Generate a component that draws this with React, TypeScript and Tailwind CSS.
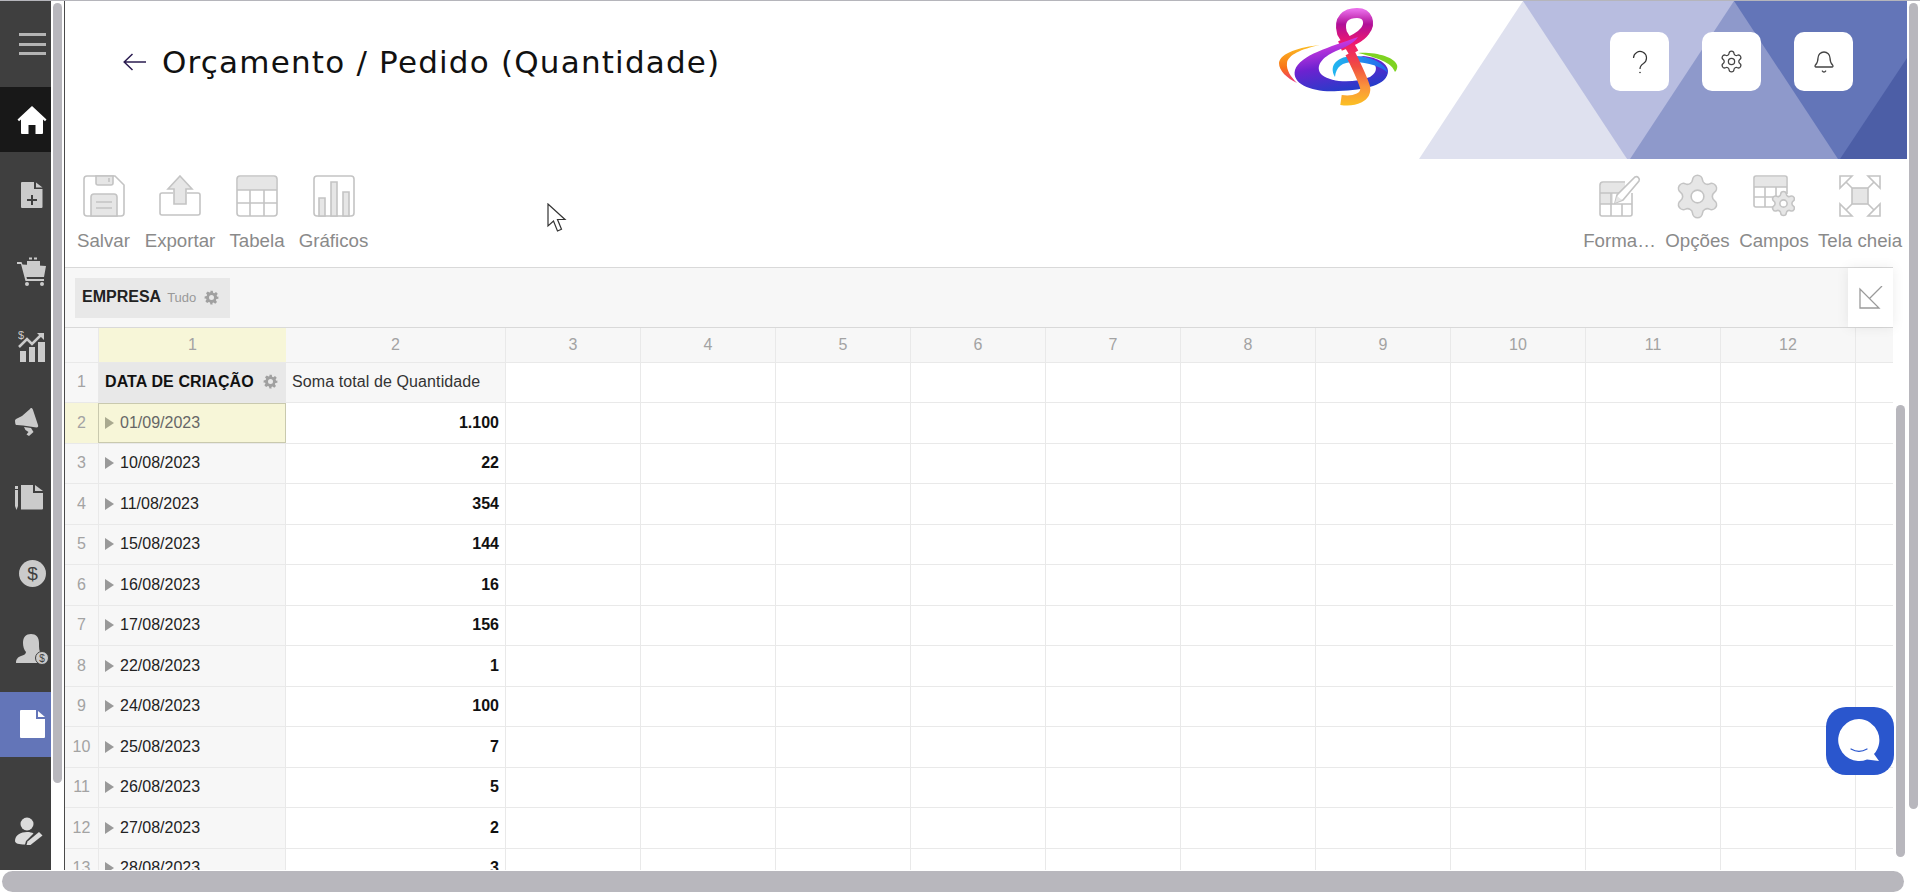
import type { FC, ReactNode } from "react";
import { Settings, Bell } from "lucide-react";

const FONT = "font-['Liberation_Sans',Arial,sans-serif]";

const GearSolid: FC<{ className?: string }> = ({ className }) => (
  <svg viewBox="0 0 24 24" className={className} fill="currentColor">
    <path
      fillRule="evenodd"
      d="M10 1h4l.6 3.2 1.900.8 2.700-1.800 2.800 2.800-1.800 2.700.8 1.900L23 10.200v3.600l-3.200.6-.8 1.900 1.800 2.700-2.800 2.800-2.700-1.800-1.900.8L13.800 23h-3.600l-.6-3.200-1.900-.8-2.700 1.800-2.800-2.800 1.800-2.700-.8-1.900L1 13.800v-3.600l3.200-.6.8-1.900L3.200 5 6 2.200l2.700 1.800 1.900-.8L10 1Zm2 7a4 4 0 1 0 0 8 4 4 0 0 0 0-8Z"
    />
  </svg>
);

const sideIcons: { key: string; active?: "dark" | "blue"; icon: ReactNode }[] = [
  {
    key: "home",
    active: "dark",
    icon: (
      <svg viewBox="0 0 30 30" className="h-[30px] w-[30px] text-white" fill="currentColor">
        <path d="M15 1 0.500 14.500l1.500 1.700L4 14.500V28a1 1 0 0 0 1 1h6.500v-9h7v9H25a1 1 0 0 0 1-1V14.500l2 1.700 1.500-1.700L15 1Z" />
      </svg>
    ),
  },
  {
    key: "new",
    icon: (
      <svg viewBox="0 0 22 26" className="h-[26px] w-[22px]" fill="currentColor">
        <path fillRule="evenodd" d="M1 0h12v7h8.500v18a1 1 0 0 1-1 1H1a1 1 0 0 1-1-1V1a1 1 0 0 1 1-1Zm9 13v4H6v2h4v4h2v-4h4v-2h-4v-4h-2Z" />
        <path d="M15 0.500 21.500 5.500H15Z" />
      </svg>
    ),
  },
  {
    key: "cart",
    icon: (
      <svg viewBox="0 0 30 30" className="h-[30px] w-[30px]" fill="currentColor">
        <path d="M10 5h13v8H10Z" />
        <path d="M12 1.500h3v2h-3ZM17 1.500h3v2h-3Z" />
        <path d="M0 6h4.500l1 2.500 23.500 1.500-2 11H9.500l.5 2h17v2H8.500L4 8H0Z" />
        <circle cx="10" cy="28" r="2" />
        <circle cx="25" cy="28" r="2" />
      </svg>
    ),
  },
  {
    key: "chart",
    icon: (
      <svg viewBox="0 0 28 32" className="h-[32px] w-[28px]" fill="currentColor">
        <path d="M2 21h6v11H2ZM11 17h6v15h-6ZM20 12h7v20h-7Z" />
        <path d="M1 17 9 9l5 5 9-9" fill="none" stroke="currentColor" strokeWidth="2.500" />
        <path d="M19 3h7v7Z" />
        <text x="0" y="9" fontSize="11" fontFamily="Liberation Sans">$</text>
      </svg>
    ),
  },
  {
    key: "megaphone",
    icon: (
      <svg viewBox="0 0 24 28" className="mr-[10px] h-[28px] w-[24px]" fill="currentColor">
        <path d="M16 0c1 0 1.500.5 2 2l5 15c.5 1.500 0 2.500-1.500 2.500L8 17.500l-6-.5c-1 0-1.500-.5-1.700-1.500L0 13c0-1 .5-1.500 1-2l6-3 8-7c.4-.6.600-1 1-1Z" />
        <path d="M9 19l7 1 2.500 4-4.500 4-2.500-1.500 2-2.500-3-2Z" />
      </svg>
    ),
  },
  {
    key: "docs",
    icon: (
      <svg viewBox="0 0 28 26" className="mr-[6px] h-[26px] w-[28px]" fill="currentColor">
        <path d="M0 2h3v3H0ZM0 6h3v16l-1.500 4L0 22Z" />
        <path d="M6 1h12v8h10v15.500a1 1 0 0 1-1 1H6Z" />
        <path d="M20 1l8 6h-8Z" />
      </svg>
    ),
  },
  {
    key: "dollar",
    icon: (
      <svg viewBox="0 0 27 27" className="h-[27px] w-[27px]">
        <circle cx="13.500" cy="13.500" r="13.500" fill="currentColor" />
        <text x="13.500" y="20" fontSize="19" textAnchor="middle" fill="#3f3f3f" fontFamily="Liberation Sans">$</text>
      </svg>
    ),
  },
  {
    key: "seller",
    icon: (
      <svg viewBox="0 0 34 32" className="h-[32px] w-[34px]">
        <path fill="currentColor" d="M16 1c5 0 8 3 8 9 0 5 0 8 2 10l1 4-5 4 0 2H1c0-4 2-6 5-7 3-1 5-2 5-4-2-2-3-6-3-9 0-6 3-9 8-9Z" />
        <circle cx="27" cy="25" r="6.500" fill="currentColor" stroke="#3f3f3f" strokeWidth="1" />
        <text x="27" y="29" fontSize="10" textAnchor="middle" fill="#3f3f3f" fontFamily="Liberation Sans">$</text>
      </svg>
    ),
  },
  {
    key: "report",
    active: "blue",
    icon: (
      <svg viewBox="0 0 25 28" className="h-[28px] w-[25px] text-white" fill="currentColor">
        <path d="M1 0h15v9h9v18a1 1 0 0 1-1 1H1a1 1 0 0 1-1-1V1a1 1 0 0 1 1-1Z" />
        <path d="M18 1l7 6h-7Z" />
      </svg>
    ),
  },
];

const Sidebar: FC = () => (
  <aside className="flex h-full w-[51px] shrink-0 flex-col bg-[#3f3f3f] text-[#cbcbcb]">
    <div className="flex h-[86px] shrink-0 items-center justify-center pl-[14px]">
      <div className="flex w-[27px] flex-col gap-[6.500px]">
        <span className="h-[3px] bg-[#b4b4b4]" />
        <span className="h-[3px] bg-[#b4b4b4]" />
        <span className="h-[3px] bg-[#b4b4b4]" />
      </div>
    </div>
    <div className="flex flex-col gap-[10.600px]">
      {sideIcons.map((item) => (
        <div
          key={item.key}
          className={
            item.active === "dark"
              ? "flex h-[65px] items-center justify-center bg-[#181818] pl-[13px]"
              : item.active === "blue"
                ? "flex h-[65px] items-center justify-center bg-[#6375b8] pl-[13px]"
                : "flex h-[65px] items-center justify-center pl-[13px]"
          }
        >
          {item.icon}
        </div>
      ))}
    </div>
    <div className="mt-[60px] flex justify-center pl-[6px] text-[#dcdcdc]">
      <svg viewBox="0 0 28 28" className="h-[28px] w-[28px]" fill="currentColor">
        <circle cx="12" cy="7" r="6.500" />
        <path d="M0 24c0-6 6-9 12-9 3 0 5 .5 6.500 1.500L11 24l-1 3.500C4 27.500 0 26.500 0 24Z" />
        <path d="M24 15l3.500 3.500-12 9.500-4 0 1-3.500Z" />
      </svg>
    </div>
  </aside>
);

const stroke = "#c4c4c4";
const fillLight = "#e6e6e6";

const ToolIcon: FC<{ name: string }> = ({ name }) => {
  const common = { fill: "none", stroke, strokeWidth: 1.600 };
  switch (name) {
    case "save":
      return (
        <svg viewBox="0 0 42 42" className="h-[42px] w-[42px]">
          <path {...common} d="M4 1h28l9 9v28a3 3 0 0 1-3 3H4a3 3 0 0 1-3-3V4a3 3 0 0 1 3-3Z" />
          <path {...common} fill={fillLight} d="M13 1h17v7a2 2 0 0 1-2 2H15a2 2 0 0 1-2-2Z" />
          <path {...common} d="M26 3v4" />
          <path {...common} fill={fillLight} d="M8 41V22a3 3 0 0 1 3-3h20a3 3 0 0 1 3 3v19Z" />
          <path {...common} d="M13 27h16M13 33h16" />
        </svg>
      );
    case "export":
      return (
        <svg viewBox="0 0 42 42" className="h-[42px] w-[42px]">
          <path {...common} d="M14 18H3a2 2 0 0 0-2 2v18a2 2 0 0 0 2 2h36a2 2 0 0 0 2-2V20a2 2 0 0 0-2-2H28" />
          <path {...common} fill={fillLight} d="M21 1 33 14h-6v15H15V14H9Z" />
        </svg>
      );
    case "table":
      return (
        <svg viewBox="0 0 42 42" className="h-[42px] w-[42px]">
          <path fill={fillLight} d="M2 2h38v13H2Z" />
          <rect {...common} x="1" y="1" width="40" height="40" rx="3" />
          <path {...common} d="M1 15h40M1 28h40M14 15v26M28 15v26" />
        </svg>
      );
    case "chart":
      return (
        <svg viewBox="0 0 42 42" className="h-[42px] w-[42px]">
          <rect {...common} x="1" y="1" width="40" height="40" rx="3" />
          <path {...common} fill={fillLight} d="M6 41V23h6v18ZM18 41V7h6v34ZM30 41V17h6v24Z" />
        </svg>
      );
    case "format":
      return (
        <svg viewBox="0 0 42 42" className="h-[42px] w-[42px]">
          <path fill={fillLight} d="M2 8h24v10H2ZM2 18h12v11H2Z" />
          <path {...common} d="M33 18v21a2 2 0 0 1-2 2H3a2 2 0 0 1-2-2V10a3 3 0 0 1 3-3h22" />
          <path {...common} d="M1 18h24M1 29h32M12 18v23M23 29v12" />
          <path fill="#fff" stroke={stroke} strokeWidth="1.600" d="M36 2a3 3 0 0 1 4 4L24 25l-8 3 2-8Z" />
          <path fill={fillLight} d="M18 21l5 4-7 3Z" />
        </svg>
      );
    case "options":
      return (
        <div className="flex h-[42px] w-[42px] items-center justify-center">
          <Settings
            className="h-[51px] w-[51px] shrink-0 [&>circle]:fill-white"
            fill={fillLight}
            stroke={stroke}
            strokeWidth={0.750}
          />
        </div>
      );
    case "fields":
      return (
        <svg viewBox="0 0 42 42" className="h-[42px] w-[42px]">
          <path fill={fillLight} d="M2 2h31v10H2Z" />
          <path {...common} d="M20 32H3a2 2 0 0 1-2-2V3a2 2 0 0 1 2-2h29a2 2 0 0 1 2 2v16" />
          <path {...common} d="M1 12h33M1 22h22M12 12v20M23 12v12" />
          <Settings x={16} y={14} width={29} height={29} fill={fillLight} stroke={stroke} strokeWidth={1.300} className="[&>circle]:fill-white" />
        </svg>
      );
    default:
      return (
        <svg viewBox="0 0 42 42" className="h-[42px] w-[42px]">
          <rect fill={fillLight} stroke={stroke} strokeWidth="1.600" x="13" y="13" width="16" height="16" />
          <path {...common} d="M1 1h12L1 13ZM41 1H29l12 12ZM1 41h12L1 29ZM41 41H29l12-12Z" />
          <path {...common} d="M7 7l6 6M35 7l-6 6M7 35l6-6M35 35l-6-6" />
        </svg>
      );
  }
};

const ToolItem: FC<{ icon: string; label: string; width: string }> = ({ icon, label, width }) => (
  <div className={`flex flex-col items-center ${width}`}>
    <ToolIcon name={icon} />
    <span className="mt-[12px] whitespace-nowrap text-[18.700px] leading-[24px] text-[#8a8a8a]">{label}</span>
  </div>
);

const Logo: FC = () => (
  <svg viewBox="0 0 135 105" className="h-[105px] w-[135px]">
    <defs>
      <linearGradient id="stem" gradientUnits="userSpaceOnUse" x1="0" y1="5" x2="0" y2="100">
        <stop offset="0" stopColor="#e86be8" />
        <stop offset="0.150" stopColor="#b01098" />
        <stop offset="0.350" stopColor="#f0186e" />
        <stop offset="0.600" stopColor="#f05040" />
        <stop offset="0.800" stopColor="#fb923c" />
        <stop offset="1" stopColor="#fbbf24" />
      </linearGradient>
      <linearGradient id="swirl" gradientUnits="userSpaceOnUse" x1="70" y1="34" x2="80" y2="88">
        <stop offset="0" stopColor="#d43be0" />
        <stop offset="0.450" stopColor="#6d22d0" />
        <stop offset="1" stopColor="#1d3fc8" />
      </linearGradient>
      <linearGradient id="cyan" gradientUnits="userSpaceOnUse" x1="62" y1="0" x2="118" y2="0">
        <stop offset="0" stopColor="#22b8f0" />
        <stop offset="1" stopColor="#2563eb" />
      </linearGradient>
      <linearGradient id="arc" gradientUnits="userSpaceOnUse" x1="0" y1="40" x2="0" y2="78">
        <stop offset="0" stopColor="#fbbf24" />
        <stop offset="0.600" stopColor="#f97316" />
        <stop offset="1" stopColor="#ec2f7b" />
      </linearGradient>
    </defs>
    <path fill="url(#arc)" d="M50 40C30 42 10 48 9 58c0 8 8 15 18 20-6-6-11-13-10-20 1-8 14-14 33-18Z" />
    <path fill="#7ed321" d="M88 48c18-1 36 4 39 12 1 3-1 6-2 7-3-8-12-13-37-19Z" />
    <path fill="none" stroke="url(#stem)" strokeWidth="10" d="M84 48 72 28C68 14 76 8 87 8c11 0 14 10 8 18-5 7-15 11-25 15" />
    <path fill="url(#swirl)" d="M88 32C60 42 30 50 25 65c-4 15 20 23 43 21 27-1 50-6 50-20 0-8-13-15-28-15 18 5 20 15 10 21-15 6-38 6-48-2-8-8 0-18 14-24 10-4 18-8 22-14Z" />
    <path fill="url(#cyan)" d="M65 72c-7-12 3-21 19-21 16 0 32 7 34 17-6-6-20-11-34-11-12 0-18 5-19 15Z" />
    <path fill="none" stroke="url(#stem)" strokeWidth="10" d="M80 48c6 12 12 24 15 34 2 10-10 15-24 13" />
  </svg>
);

const rows = [
  ["01/09/2023", "1.100"],
  ["10/08/2023", "22"],
  ["11/08/2023", "354"],
  ["15/08/2023", "144"],
  ["16/08/2023", "16"],
  ["17/08/2023", "156"],
  ["22/08/2023", "1"],
  ["24/08/2023", "100"],
  ["25/08/2023", "7"],
  ["26/08/2023", "5"],
  ["27/08/2023", "2"],
  ["28/08/2023", "3"],
];

const emptyCols = Array.from({ length: 10 }, (_, i) => i + 3);

const GridHeader: FC = () => (
  <div className="flex h-[34.500px] shrink-0 border-b border-[#e9e9e9] bg-[#f7f7f7] text-[16px] text-[#a3a3a3]">
    <div className="w-[34px] shrink-0 border-r border-[#e9e9e9]" />
    <div className="flex w-[187px] shrink-0 items-center justify-center bg-[#f7f6d8]">1</div>
    <div className="flex w-[220px] shrink-0 items-center justify-center border-r border-[#e9e9e9]">2</div>
    {emptyCols.map((n) => (
      <div key={n} className="flex w-[135px] shrink-0 items-center justify-center border-r border-[#e9e9e9]">
        {n}
      </div>
    ))}
    <div className="w-[38px] shrink-0" />
  </div>
);

const EmptyCells: FC = () => (
  <>
    {emptyCols.map((n) => (
      <div key={n} className="w-[135px] shrink-0 border-r border-[#e9e9e9]" />
    ))}
    <div className="w-[38px] shrink-0" />
  </>
);

const PivotGrid: FC = () => (
  <div className="flex h-[542px] flex-col overflow-hidden bg-white">
    <GridHeader />
    <div className="flex h-[40.500px] shrink-0 border-b border-[#e9e9e9]">
      <div className="flex w-[34px] shrink-0 items-center justify-center border-r border-[#e9e9e9] bg-[#f7f7f7] text-[16px] text-[#a3a3a3]">
        1
      </div>
      <div className="flex w-[187px] shrink-0 items-center justify-between bg-[#e8e8e8] pb-px pl-[6px] pr-[8px] text-[16px] font-bold tracking-[0.1px] text-[#111]">
        DATA DE CRIAÇÃO
        <GearSolid className="h-[15px] w-[15px] text-[#a0a0a0]" />
      </div>
      <div className="flex w-[220px] shrink-0 items-center border-r border-[#e9e9e9] bg-[#f7f7f7] pb-px pl-[6px] text-[16px] tracking-[0.1px] text-[#333]">
        Soma total de Quantidade
      </div>
      <EmptyCells />
    </div>
    {rows.map(([date, qty], i) => {
      const selected = i === 0;
      return (
        <div key={date} className="flex h-[40.500px] shrink-0 border-b border-[#e9e9e9]">
          <div
            className={
              selected
                ? "flex w-[33px] shrink-0 items-center justify-center bg-[#f7f6d8] text-[16px] text-[#a3a3a3]"
                : "flex w-[34px] shrink-0 items-center justify-center border-r border-[#e9e9e9] bg-[#f7f7f7] text-[16px] text-[#a3a3a3]"
            }
          >
            {i + 2}
          </div>
          <div
            className={
              selected
                ? "flex w-[188px] shrink-0 items-center border border-[#c9c9ae] bg-[#f7f6d8] pl-[6px] text-[16px] text-[#666]"
                : "flex w-[187px] shrink-0 items-center border-r border-[#e9e9e9] bg-[#f7f7f7] pl-[6px] text-[16px] text-[#222]"
            }
          >
            <span className={selected ? "mr-[6px] h-0 w-0 border-y-[6px] border-l-[9px] border-y-transparent border-l-[#a9a98f]" : "mr-[6px] h-0 w-0 border-y-[6px] border-l-[9px] border-y-transparent border-l-[#999]"} />
            {date}
          </div>
          <div className="flex w-[220px] shrink-0 items-center justify-end border-r border-[#e9e9e9] pr-[6px] text-[16px] font-bold text-[#111]">
            {qty}
          </div>
          <EmptyCells />
        </div>
      );
    })}
  </div>
);

const HeaderButton: FC<{ children: ReactNode }> = ({ children }) => (
  <button className="flex h-[59px] w-[59px] items-center justify-center rounded-[10px] bg-white text-[#444]">
    {children}
  </button>
);

const App: FC = () => (
  <div className={`relative flex h-[893px] w-[1920px] flex-col overflow-hidden bg-white ${FONT}`}>
    <div className="h-px shrink-0 bg-[#b5b5bb]" />
    <div className="flex h-[869px] shrink-0">
      <Sidebar />
      {/* left scroll gutter */}
      <div className="w-[13px] shrink-0 pl-[2px] pt-[2px]">
        <div className="h-[780px] w-[9px] rounded-full bg-[#b8b7bd]" />
      </div>
      <main className="flex w-[1843px] shrink-0 flex-col border-l border-[#4a4a4a]">
        {/* header */}
        <header className="relative flex h-[158px] shrink-0 items-start">
          <svg viewBox="0 0 488 158" className="absolute right-0 top-0 h-[158px] w-[488px]">
            <path fill="#dfe1ef" d="M0 158 104 0h26l78 158Z" />
            <path fill="#b8bde0" d="M104 0h211v158H208Z" />
            <path fill="#6375b8" d="M315 0h173v158H315Z" />
            <path fill="#8e99cb" d="M315 0 211 158h208Z" />
            <path fill="#4c5ea6" d="M488 57v101h-67Z" />
          </svg>
          <div className="ml-[58px] mt-[41px] flex items-center">
            <svg viewBox="0 0 23 18" className="h-[18px] w-[23px]" fill="none" stroke="#2b1c50" strokeWidth="1.500">
              <path d="M23 9H1M9.500 1 1.200 9l8.300 8" />
            </svg>
            <h1 className="ml-[16px] whitespace-nowrap font-['DejaVu_Sans',sans-serif] text-[31px] leading-[40px] tracking-[1.200px] text-[#111]">
              Orçamento / Pedido (Quantidade)
            </h1>
          </div>
          <div className="absolute left-[1205px] top-[4px]">
            <Logo />
          </div>
          <div className="absolute right-[54px] top-[31px] flex gap-[33px]">
            <HeaderButton>
              <svg viewBox="0 0 16 24" className="h-[24px] w-[16px]" fill="none" stroke="#333" strokeWidth="1.200">
                <path d="M1.500 8a6.500 6.500 0 1 1 10 5.500C9 15 8 16.500 8 19" />
                <circle cx="8" cy="22.500" r=".8" fill="#333" stroke="none" />
              </svg>
            </HeaderButton>
            <HeaderButton>
              <Settings className="h-[25px] w-[25px]" strokeWidth={1.200} />
            </HeaderButton>
            <HeaderButton>
              <Bell className="h-[24px] w-[24px]" strokeWidth={1.300} />
            </HeaderButton>
          </div>
        </header>

        <div className="flex flex-1">
          <div className="flex w-[1828px] shrink-0 flex-col">
            {/* toolbar */}
            <div className="flex h-[108px] shrink-0 items-start justify-between pt-[16px]">
              <div className="flex pl-[11px]">
                <ToolItem icon="save" label="Salvar" width="w-[55px]" />
                <ToolItem icon="export" label="Exportar" width="ml-[13px] w-[72px]" />
                <ToolItem icon="table" label="Tabela" width="ml-[13px] w-[56px]" />
                <ToolItem icon="chart" label="Gráficos" width="ml-[13px] w-[71px]" />
              </div>
              <div className="-mr-[9px] flex">
                <ToolItem icon="format" label="Forma…" width="w-[73px]" />
                <ToolItem icon="options" label="Opções" width="ml-[9px] w-[65px]" />
                <ToolItem icon="fields" label="Campos" width="ml-[9px] w-[70px]" />
                <ToolItem icon="full" label="Tela cheia" width="ml-[9px] w-[84px]" />
              </div>
            </div>
            {/* filters */}
            <div className="relative flex h-[61px] shrink-0 items-center border-y border-[#d9d9d9] bg-[#f7f7f7] pl-[10px]">
              <div className="flex h-[40px] w-[155px] items-center bg-[#e8e8e8] pb-px pl-[7px]">
                <span className="text-[16px] font-bold text-[#222]">EMPRESA</span>
                <span className="ml-[6px] mt-[2px] text-[13px] text-[#999]">Tudo</span>
                <GearSolid className="ml-[8px] h-[15px] w-[15px] text-[#a0a0a0]" />
              </div>
              <button className="absolute right-0 top-0 flex h-[59px] w-[45px] items-center justify-center bg-white shadow-[0_0_12px_rgba(0,0,0,0.08)]">
                <svg viewBox="0 0 24 24" className="h-[24px] w-[24px]" fill="none" stroke="#9a9a9a" strokeWidth="1.300">
                  <path d="M1 3v19h19ZM23 0 10.500 12.500" />
                </svg>
              </button>
            </div>
            <PivotGrid />
          </div>
          {/* grid scroll gutter */}
          <div className="w-[14px] shrink-0 pl-[3px] pt-[246px]">
            <div className="h-[452px] w-[9px] rounded-full bg-[#b8b7bd]" />
          </div>
        </div>
      </main>
      <div className="w-[13px] shrink-0 pl-[2px] pt-[2px]">
        <div className="h-[806px] w-[9px] rounded-full bg-[#b8b7bd]" />
      </div>
    </div>
    {/* bottom scrollbar */}
    <div className="h-[23px] shrink-0 pl-[2px] pt-px">
      <div className="h-[21px] w-[1902px] rounded-full bg-[#b8b7bd]" />
    </div>

    {/* chat widget */}
    <button className="absolute left-[1826px] top-[707px] flex h-[68px] w-[68px] items-center justify-center rounded-[20px] bg-[#2a56cd]">
      <svg viewBox="0 0 44 44" className="h-[44px] w-[44px]">
        <path fill="#fff" d="M21 0a21 21 0 1 0 8 40.500l12 1.500-5-7A21 21 0 0 0 21 0Z" />
        <path fill="none" stroke="#2a56cd" strokeWidth="1.200" strokeLinecap="round" d="M13 30c5 3 11 3 16 0" />
      </svg>
    </button>

    {/* mouse pointer */}
    <svg viewBox="0 0 20 30" className="absolute left-[547px] top-[203px] h-[30px] w-[20px]">
      <path fill="#fff" stroke="#333" strokeWidth="1.200" d="M1 1v22l5.500-5 4 10 4-1.800-4-9.700H18Z" />
    </svg>
  </div>
);

export default App;
